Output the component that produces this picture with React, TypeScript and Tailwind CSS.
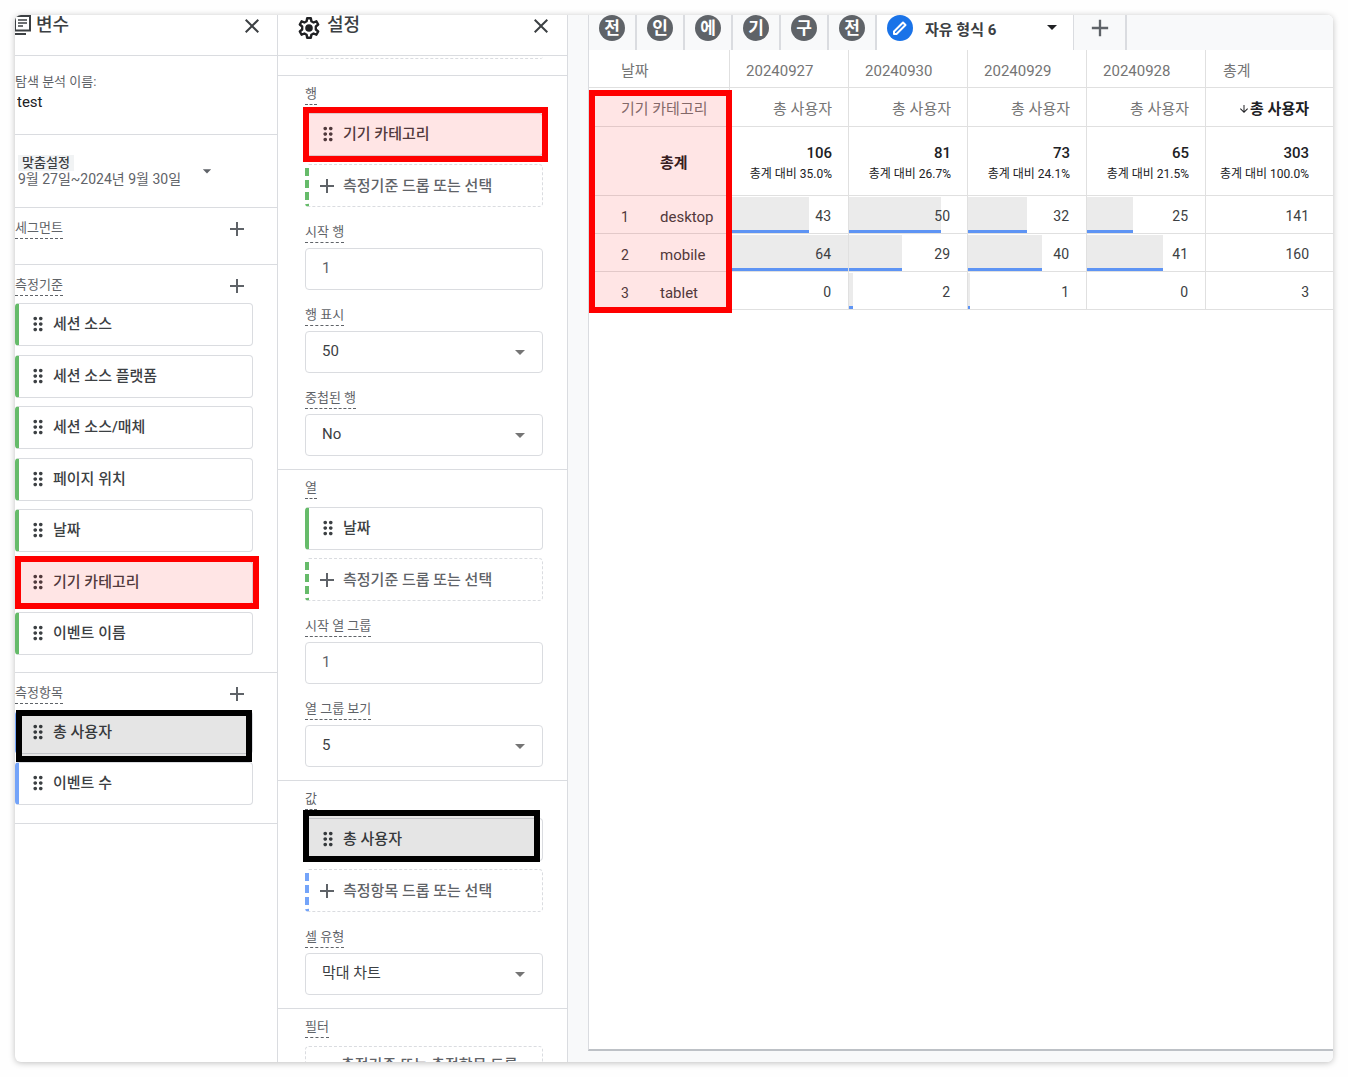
import type { ReactNode } from 'react';
import {
  MdAdd,
  MdArrowDownward,
  MdArrowDropDown,
  MdClose,
  MdDragIndicator,
} from 'react-icons/md';

type Tone = 'dimension' | 'metric';

interface ChipItem {
  label: string;
  /** Classes of the marker drawn over the chip, if any. */
  marker?: string;
}

const RED_MARKER = 'border-[#ff0000] bg-[#ff0000]/10';
const BLACK_MARKER = 'border-black bg-black/10';

const DIMENSIONS: ChipItem[] = [
  { label: '세션 소스' },
  { label: '세션 소스 플랫폼' },
  { label: '세션 소스/매체' },
  { label: '페이지 위치' },
  { label: '날짜' },
  { label: '기기 카테고리', marker: `${RED_MARKER} -top-[6px] -bottom-[6px] -left-1 -right-[7px]` },
  { label: '이벤트 이름' },
];

const METRICS: ChipItem[] = [
  { label: '총 사용자', marker: `${BLACK_MARKER} -top-[2px] -bottom-[9px] -left-[3px] right-0` },
  { label: '이벤트 수' },
];

const TABS = ['전', '인', '에', '기', '구', '전'];

const DATES = [
  { date: '20240927', total: 106, share: '35.0%' },
  { date: '20240930', total: 81, share: '26.7%' },
  { date: '20240929', total: 73, share: '24.1%' },
  { date: '20240928', total: 65, share: '21.5%' },
];

const ROWS = [
  { name: 'desktop', values: [43, 50, 32, 25], total: 141 },
  { name: 'mobile', values: [64, 29, 40, 41], total: 160 },
  { name: 'tablet', values: [0, 2, 1, 0], total: 3 },
];

const MAX_VALUE = Math.max(...ROWS.flatMap((row) => row.values));

function VariablesIcon() {
  return (
    <svg className="h-5 w-4 shrink-0" viewBox="0 0 16 20" fill="none" stroke="#3c4043" strokeWidth="2">
      <path d="M0 1h15v14.500H0M0 19h11" />
      <path d="M.5 1v14" strokeWidth="1" />
      <path d="M3 5h9M3 8h9M3 11h5" strokeWidth="1.6" />
    </svg>
  );
}

function GearIcon() {
  return (
    <svg className="size-[26px] shrink-0" viewBox="0 0 24 24" fill="none" stroke="#202124" strokeWidth="2.2">
      <path
        strokeLinejoin="round"
        d="M10.300 3h3.400l.5 2.800 2 1.100 2.600-1.100 1.700 3-2.200 1.800v2.800l2.200 1.800-1.700 3-2.600-1.100-2 1.100-.5 2.800h-3.400l-.5-2.800-2-1.100-2.600 1.100-1.700-3 2.200-1.800v-2.800L3.500 8.800l1.700-3 2.600 1.100 2-1.100z"
      />
      <circle cx="12" cy="12" r="3.500" fill="#202124" stroke="none" />
    </svg>
  );
}

function PencilIcon() {
  return (
    <svg className="size-[18px]" viewBox="0 0 18 18" fill="none" stroke="currentColor" strokeWidth="2" strokeLinejoin="round">
      <path d="M3 12.500 12 3.500l2.500 2.500-9 9H3z" />
    </svg>
  );
}

function PanelHeader({ icon, title, className }: { icon: ReactNode; title: string; className?: string }) {
  return (
    <header className={`flex h-[41px] shrink-0 items-start border-b border-[#dadce0] ${className ?? ''}`}>
      {icon}
      <h2 className="ml-[5px] text-[18px] leading-5 font-medium text-[#3c4043]">{title}</h2>
      <button type="button" aria-label="닫기" className="ml-auto -mt-px text-[#3c4043]">
        <MdClose className="size-6" />
      </button>
    </header>
  );
}

function Chip({ label, marker, tone }: ChipItem & { tone: Tone }) {
  return (
    <div
      className={`relative flex h-[43px] items-center rounded border border-l-4 border-[#dadce0] bg-white pb-px pl-2 text-[15px] font-medium text-[#3c4043] ${
        tone === 'dimension' ? 'border-l-[#66bb6a]' : 'border-l-[#74a4f9]'
      }`}
    >
      <MdDragIndicator className="size-[22px]" />
      <span className="ml-1 leading-5">{label}</span>
      {marker && <span className={`absolute border-[6px] ${marker}`} />}
    </div>
  );
}

function DropZone({ label, tone }: { label: string; tone: Tone }) {
  return (
    <button
      type="button"
      className={`mt-2 flex h-[43px] w-full items-center rounded border border-l-4 border-dashed border-[#dadce0] pl-[6px] text-[15px] text-[#5f6368] ${
        tone === 'dimension' ? 'border-l-[#66bb6a]' : 'border-l-[#74a4f9]'
      }`}
    >
      <MdAdd className="size-6" />
      <span className="ml-1 leading-5 font-medium">{label}</span>
    </button>
  );
}

function HintLabel({ children, htmlFor }: { children: ReactNode; htmlFor?: string }) {
  const style = 'block w-fit border-b border-dashed border-[#5f6368] text-[13px] leading-5 text-[#5f6368]';
  return htmlFor ? (
    <label htmlFor={htmlFor} className={style}>
      {children}
    </label>
  ) : (
    <h3 className={style}>{children}</h3>
  );
}

function VariableSection({ title, children }: { title: string; children?: ReactNode }) {
  return (
    <section className="border-b border-[#dadce0] pr-6">
      <div className="flex items-start justify-between pt-[9px]">
        <div className="pt-px">
          <HintLabel>{title}</HintLabel>
        </div>
        <button type="button" aria-label={`${title} 추가`} className="mr-1 text-[#5f6368]">
          <MdAdd className="size-6" />
        </button>
      </div>
      {children}
    </section>
  );
}

const CONTROL =
  'h-[42px] w-full appearance-none rounded border border-[#dadce0] bg-white px-4 pb-[2px] outline-none';

function TextField({ id, label, value }: { id: string; label: string; value: string }) {
  return (
    <div className="mt-[15px]">
      <HintLabel htmlFor={id}>{label}</HintLabel>
      <input id={id} defaultValue={value} className={`mt-[5px] block text-[15px] text-[#5f6368] ${CONTROL}`} />
    </div>
  );
}

function SelectField({ id, label, value }: { id: string; label: string; value: string }) {
  return (
    <div className="mt-[15px]">
      <HintLabel htmlFor={id}>{label}</HintLabel>
      <div className="relative mt-[5px]">
        <select id={id} defaultValue={value} className={`block text-[15px] text-[#3c4043] ${CONTROL}`}>
          <option>{value}</option>
        </select>
        <MdArrowDropDown className="pointer-events-none absolute top-[9px] right-[11px] size-6 text-[#757575]" />
      </div>
    </div>
  );
}

function SettingsSection({ title, children }: { title: string; children: ReactNode }) {
  return (
    <section className="shrink-0 border-b border-[#dadce0] pt-2 pr-6 pb-[13px] pl-[27px]">
      <HintLabel>{title}</HintLabel>
      <div className="mt-2">{children}</div>
    </section>
  );
}

function VariablesPanel() {
  return (
    <aside className="w-[263px] shrink-0 border-r border-[#dadce0]">
      <PanelHeader icon={<VariablesIcon />} title="변수" className="pr-[13px]" />
      <section className="h-[79px] border-b border-[#dadce0] pt-4">
        <label htmlFor="exploration" className="block text-[13px] leading-5 text-[#5f6368]">
          탐색 분석 이름:
        </label>
        <input
          id="exploration"
          defaultValue="test"
          className="block h-5 w-56 px-[2px] text-[15px] leading-5 text-[#202124] outline-none"
        />
      </section>
      <section className="border-b border-[#dadce0]">
        <button type="button" className="flex h-[72px] w-full items-center pl-[3px] text-left">
          <span>
            <span className="block w-fit bg-[#f1f3f4] px-1 text-[13px] leading-4 font-medium text-[#3c4043]">맞춤설정</span>
            <span className="block text-[14px] leading-4 text-[#5f6368]">9월 27일~2024년 9월 30일</span>
          </span>
          <MdArrowDropDown className="ml-4 size-5 text-[#5f6368]" />
        </button>
      </section>
      <VariableSection title="세그먼트">
        <div className="h-[23px]" />
      </VariableSection>
      <VariableSection title="측정기준">
        <div className="mt-[5px] mb-[17px] flex h-[352px] flex-col justify-between">
          {DIMENSIONS.map((item) => (
            <Chip key={item.label} tone="dimension" {...item} />
          ))}
        </div>
      </VariableSection>
      <VariableSection title="측정항목">
        <div className="mt-[5px] mb-[18px] flex flex-col gap-2">
          {METRICS.map((item) => (
            <Chip key={item.label} tone="metric" {...item} />
          ))}
        </div>
      </VariableSection>
    </aside>
  );
}

function SettingsPanel() {
  return (
    <aside className="flex w-[290px] shrink-0 flex-col overflow-hidden border-r border-[#dadce0]">
      <PanelHeader icon={<GearIcon />} title="설정" className="pr-[14px] pl-[18px]" />
      <div className="h-5 shrink-0 border-b border-[#dadce0] pr-6 pl-[27px]">
        <div className="h-[3px] rounded-b border-b border-dashed border-[#dadce0]" />
      </div>
      <SettingsSection title="행">
        <Chip
          label="기기 카테고리"
          tone="dimension"
          marker={`${RED_MARKER} -top-[7px] -bottom-[7px] -left-[6px] -right-[6px]`}
        />
        <DropZone label="측정기준 드롭 또는 선택" tone="dimension" />
        <TextField id="start-row" label="시작 행" value="1" />
        <SelectField id="show-rows" label="행 표시" value="50" />
        <SelectField id="nested-rows" label="중첩된 행" value="No" />
      </SettingsSection>
      <SettingsSection title="열">
        <Chip label="날짜" tone="dimension" />
        <DropZone label="측정기준 드롭 또는 선택" tone="dimension" />
        <TextField id="start-column" label="시작 열 그룹" value="1" />
        <SelectField id="show-columns" label="열 그룹 보기" value="5" />
      </SettingsSection>
      <SettingsSection title="값">
        <Chip
          label="총 사용자"
          tone="metric"
          marker={`${BLACK_MARKER} -top-[9px] -bottom-[2px] -left-[6px] right-[2px]`}
        />
        <DropZone label="측정항목 드롭 또는 선택" tone="metric" />
        <SelectField id="cell-type" label="셀 유형" value="막대 차트" />
      </SettingsSection>
      <SettingsSection title="필터">
        <button
          type="button"
          className="w-full rounded border border-dashed border-[#dadce0] py-2 pr-5 pl-[35px] text-left text-[15px] leading-5 font-medium text-[#5f6368]"
        >
          측정기준 또는 측정항목 드롭 또는 선택
        </button>
      </SettingsSection>
    </aside>
  );
}

function TabBar() {
  return (
    <nav className="flex h-[35px] bg-[#f8f9fa]">
      {TABS.map((tab, index) => (
        <button key={index} type="button" className="flex w-12 items-start justify-center border-r-2 border-[#dadce0]">
          <span className="flex size-[26px] items-center justify-center rounded-full bg-[#5f6368] text-[17px] leading-6 font-bold text-white">
            {tab}
          </span>
        </button>
      ))}
      <button type="button" className="flex w-[196px] items-start bg-white pl-[10px]">
        <span className="flex size-[26px] items-center justify-center rounded-full bg-[#1a73e8] text-white">
          <PencilIcon />
        </span>
        <span className="ml-3 text-[15px] leading-[30px] font-bold text-[#3c4043]">자유 형식 6</span>
        <MdArrowDropDown className="mr-[9px] ml-auto size-6 text-[#202124]" />
      </button>
      <button
        type="button"
        aria-label="탭 추가"
        className="flex w-[54px] items-start justify-center border-r-2 border-l border-[#dadce0] text-[#5f6368]"
      >
        <MdAdd className="-mt-px size-7" />
      </button>
    </nav>
  );
}

const CELL = 'border-r border-b border-[#e0e0e0]';
const LAST = 'border-b border-[#e0e0e0] pr-6 text-right';

function BarCell({ value }: { value: number }) {
  return (
    <td className={`relative pt-[3px] pr-[17px] text-right ${CELL}`}>
      {value > 0 && (
        <span
          className="absolute top-px bottom-0 left-0 border-b-[3px] border-[#5e94f4] bg-[#ebebeb]"
          style={{ width: `${(value / MAX_VALUE) * 100}%` }}
        />
      )}
      <span className="relative">{value}</span>
    </td>
  );
}

function ReportTable() {
  return (
    <div className="relative">
      <table className="w-full table-fixed border-separate border-spacing-0 text-[14px] leading-5 text-[#3c4043]">
        <colgroup>
          <col className="w-[55px]" />
          <col className="w-[86px]" />
          {DATES.map(({ date }) => (
            <col key={date} className="w-[119px]" />
          ))}
          <col />
        </colgroup>
        <thead className="text-[15px] text-[#757575]">
          <tr className="h-[38px]">
            <th colSpan={2} className={`pt-1 pl-8 text-left font-normal ${CELL}`}>
              날짜
            </th>
            {DATES.map(({ date }) => (
              <th key={date} className={`pt-1 pl-4 text-left font-normal ${CELL}`}>
                {date}
              </th>
            ))}
            <th className="border-b border-[#e0e0e0] pt-1 pl-[17px] text-left font-normal">총계</th>
          </tr>
          <tr className="h-[39px]">
            <th colSpan={2} className={`pt-1 pl-8 text-left font-normal ${CELL}`}>
              기기 카테고리
            </th>
            {DATES.map(({ date }) => (
              <th key={date} className={`pt-1 pr-4 text-right font-normal ${CELL}`}>
                총 사용자
              </th>
            ))}
            <th className={`pt-1 font-bold text-[#202124] ${LAST}`}>
              <span className="flex items-center justify-end">
                <MdArrowDownward className="size-3" />
                총 사용자
              </span>
            </th>
          </tr>
        </thead>
        <tbody>
          <tr className="h-[69px] text-[#202124]">
            <td className="border-b border-[#e0e0e0]" />
            <th className={`pt-1 pl-4 text-left text-[15px] font-bold ${CELL}`}>총계</th>
            {DATES.map(({ date, total, share }) => (
              <td key={date} className={`pt-1 pr-4 text-right whitespace-nowrap ${CELL}`}>
                <div className="text-[15px] leading-[22px] font-medium">{total}</div>
                <div className="text-[12px]">총계 대비 {share}</div>
              </td>
            ))}
            <td className={`pt-1 whitespace-nowrap ${LAST}`}>
              <div className="text-[15px] leading-[22px] font-medium">303</div>
              <div className="text-[12px]">총계 대비 100.0%</div>
            </td>
          </tr>
          {ROWS.map((row, index) => (
            <tr key={row.name} className="h-[38px]">
              <td className="border-b border-[#e0e0e0] pt-1 pl-8">{index + 1}</td>
              <th className={`pt-1 pl-4 text-left text-[15px] font-normal ${CELL}`}>{row.name}</th>
              {row.values.map((value, column) => (
                <BarCell key={column} value={value} />
              ))}
              <td className={`pt-[3px] ${LAST}`}>{row.total}</td>
            </tr>
          ))}
        </tbody>
      </table>
      <span className="absolute top-10 -bottom-[3px] left-0 w-[143px] border-[6px] border-[#ff0000] bg-[#ff0000]/10" />
    </div>
  );
}

export default function App() {
  return (
    <div className="h-screen bg-[#fefefe] p-[15px] font-[Roboto,'Noto_Sans_CJK_KR',sans-serif]">
      <div className="flex h-full overflow-hidden rounded-md bg-white shadow-[0_1px_6px_rgba(0,0,0,0.25)]">
        <VariablesPanel />
        <SettingsPanel />
        <main className="min-w-0 flex-1 bg-[#f8f9fa] pb-[11px] pl-5">
          <div className="h-full border-b-2 border-l border-[#bdc1c6] border-l-[#dadce0] bg-white">
            <TabBar />
            <ReportTable />
          </div>
        </main>
      </div>
    </div>
  );
}
